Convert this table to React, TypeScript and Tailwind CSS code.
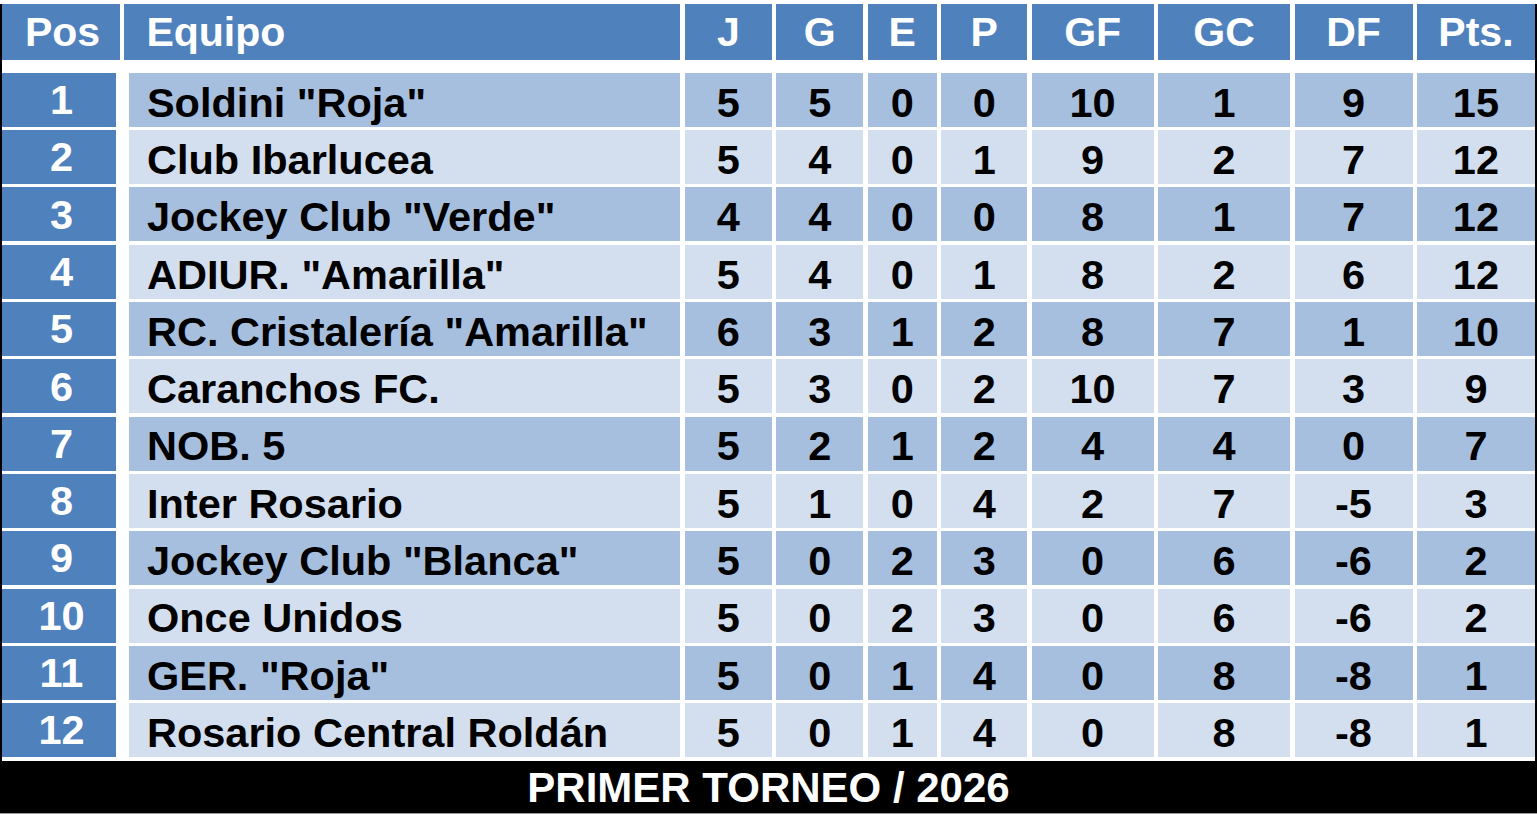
const headers = ['Pos', 'Equipo', 'J', 'G', 'E', 'P', 'GF', 'GC', 'DF', 'Pts.'];

type Row = [string, number, number, number, number, number, number, number, number];

const rows: Row[] = [
  ['Soldini "Roja"', 5, 5, 0, 0, 10, 1, 9, 15],
  ['Club Ibarlucea', 5, 4, 0, 1, 9, 2, 7, 12],
  ['Jockey Club "Verde"', 4, 4, 0, 0, 8, 1, 7, 12],
  ['ADIUR. "Amarilla"', 5, 4, 0, 1, 8, 2, 6, 12],
  ['RC. Cristalería "Amarilla"', 6, 3, 1, 2, 8, 7, 1, 10],
  ['Caranchos FC.', 5, 3, 0, 2, 10, 7, 3, 9],
  ['NOB. 5', 5, 2, 1, 2, 4, 4, 0, 7],
  ['Inter Rosario', 5, 1, 0, 4, 2, 7, -5, 3],
  ['Jockey Club "Blanca"', 5, 0, 2, 3, 0, 6, -6, 2],
  ['Once Unidos', 5, 0, 2, 3, 0, 6, -6, 2],
  ['GER. "Roja"', 5, 0, 1, 4, 0, 8, -8, 1],
  ['Rosario Central Roldán', 5, 0, 1, 4, 0, 8, -8, 1],
];

const grid =
  'grid grid-cols-[118px_556px_87px_87px_69px_86px_122px_132px_118px_118px] gap-x-[4.44px]';

export default function App() {
  return (
    <div className="w-[1537px] h-[819px] bg-white pt-[4px] font-['Liberation_Sans',Arial,sans-serif] font-bold leading-none">
      <div className="h-[809px] border-x-2 border-black flex flex-col">
        {/* Header */}
        <div className={`${grid} h-[56px] text-white text-[41px]`}>
          {headers.map((h, i) => (
            <div
              key={h}
              className={`bg-[#4f81bd] flex items-center pt-[2px] ${
                i === 1 ? 'pl-[22px]' : 'justify-center'
              } ${i === 0 ? 'pl-[3px]' : ''}`}
            >
              {h}
            </div>
          ))}
        </div>

        {/* Rows */}
        <div className="mt-[13px] flex flex-col gap-y-[3.3px] text-[41.5px]">
          {rows.map((r, idx) => {
            const rowBg = idx % 2 === 0 ? 'bg-[#a7bfde]' : 'bg-[#d3dfee]';
            const [team, ...nums] = r;
            return (
              <div key={team} className={`${grid} h-[54px]`}>
                <div className="w-[114px] pl-[5px] bg-[#4f81bd] text-white flex items-center justify-center">
                  {idx + 1}
                </div>
                <div className={`ml-[4.5px] ${rowBg} text-black flex items-center pt-[5px] pl-[18px] whitespace-nowrap`}>
                  {team}
                </div>
                {nums.map((n, j) => (
                  <div key={j} className={`${rowBg} text-black flex items-center justify-center pt-[5px]`}>
                    {n}
                  </div>
                ))}
              </div>
            );
          })}
        </div>

        {/* Footer */}
        <div className="mt-[4px] h-[52px] -mx-[2px] bg-black text-white text-[42px] flex items-center justify-center pt-[2px]">
          PRIMER TORNEO / 2026
        </div>
      </div>
      <div className="h-px bg-[#9a9a9a]" />
    </div>
  );
}
